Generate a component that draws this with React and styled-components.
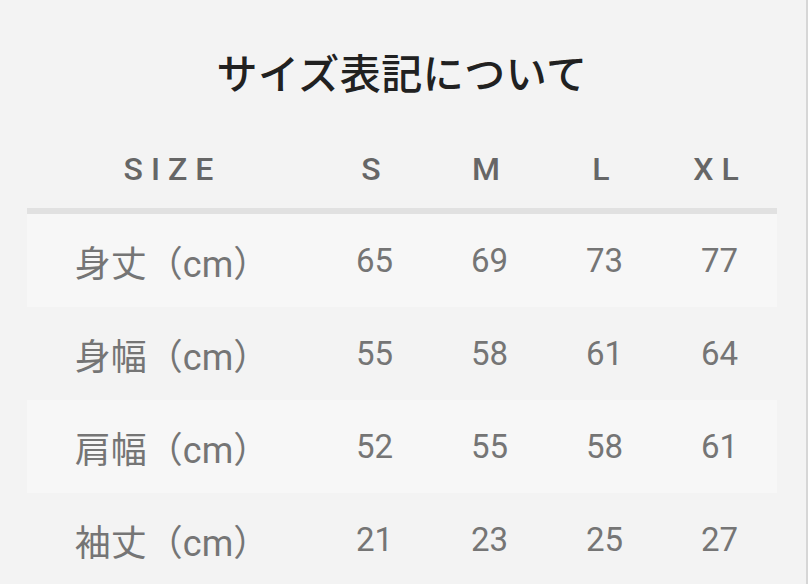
import React from 'react'
import styled, { createGlobalStyle } from 'styled-components'

const GlobalStyle = createGlobalStyle`
    html, body {
        margin: 0;
        padding: 0;
        background: #f3f3f3;
    }
    body {
        font-family: Roboto, "Noto Sans CJK JP", sans-serif;
    }
`

const Page = styled.div`
    width: 808px;
    height: 584px;
    box-sizing: border-box;
    padding-left: 27px;
    border-right: 2px solid #d6d6d6;
    overflow: hidden;
`

const Title = styled.h1`
    margin: 0;
    height: 136px;
    width: 750px;
    display: flex;
    align-items: center;
    justify-content: center;
    padding-top: 6px;
    box-sizing: border-box;
    font-family: "Noto Sans CJK JP", sans-serif;
    font-size: 41px;
    font-weight: 500;
    letter-spacing: 0.5px;
    color: #212121;
`

const Table = styled.div`
    width: 750px;
    display: grid;
    grid-template-columns: 290px repeat(4, 1fr);
`

const HeadRow = styled.div`
    display: contents;
`

const HeadCell = styled.div`
    height: 78px;
    display: flex;
    align-items: center;
    justify-content: center;
    padding-left: 1px;
    padding-bottom: 6px;
    box-sizing: border-box;
    border-bottom: 6px solid #e1e1e1;
    font-size: 32px;
    font-weight: 500;
    letter-spacing: 8px;
    color: #666666;
`

const Row = styled.div`
    display: contents;
    & > div {
        background: ${p => (p.$shaded ? '#f7f7f7' : 'transparent')};
    }
`

const Cell = styled.div`
    height: 93px;
    display: flex;
    align-items: center;
    justify-content: center;
    font-size: 33px;
    color: #757575;
`

const Label = styled(Cell)`
    font-size: 36px;
`

const sizes = ['S', 'M', 'L', 'XL']

const rows = [
    { name: '身丈（cm）', values: [65, 69, 73, 77] },
    { name: '身幅（cm）', values: [55, 58, 61, 64] },
    { name: '肩幅（cm）', values: [52, 55, 58, 61] },
    { name: '袖丈（cm）', values: [21, 23, 25, 27] },
]

const App = () => {
    return (
        <Page>
            <GlobalStyle />
            <Title>サイズ表記について</Title>
            <Table>
                <HeadRow>
                    <HeadCell>SIZE</HeadCell>
                    {sizes.map(s => (
                        <HeadCell key={s}>{s}</HeadCell>
                    ))}
                </HeadRow>
                {rows.map((r, i) => (
                    <Row key={r.name} $shaded={i % 2 === 0}>
                        <Label>{r.name}</Label>
                        {r.values.map((v, j) => (
                            <Cell key={j}>{v}</Cell>
                        ))}
                    </Row>
                ))}
            </Table>
        </Page>
    )
}

export default App
